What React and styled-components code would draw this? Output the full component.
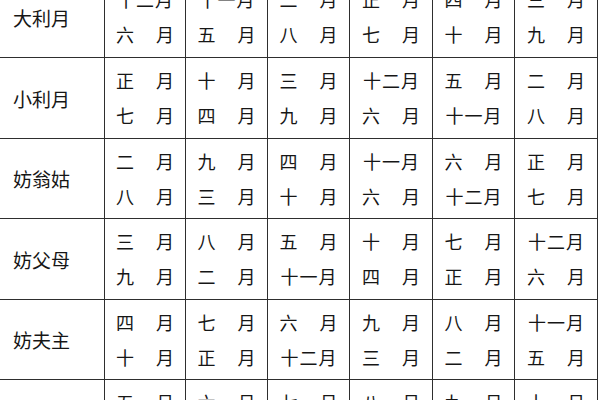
import styled, { createGlobalStyle } from 'styled-components';

const GlobalStyle = createGlobalStyle`
  html, body {
    margin: 0;
    padding: 0;
    background: #ffffff;
  }
  body {
    font-family: "Noto Sans CJK SC", "Noto Sans", sans-serif;
    color: #161616;
  }
`;

const Page = styled.div`
  width: 600px;
  height: 400px;
  overflow: hidden;
  background: #ffffff;
`;

const Grid = styled.div`
  display: grid;
  grid-template-columns: 104px 80px 81px 81px 82px 81px 82px;
  grid-template-rows: 80px 80px 79px 80px 79px 80px;
  gap: 1px;
  width: 597px;
  padding-right: 1px;
  margin-top: -23px;
  background: #2e2e2e;
`;

const Label = styled.div`
  display: flex;
  align-items: center;
  padding-left: 13px;
  background: #ffffff;
  font-size: 19px;
  color: #161616;
`;

const Cell = styled.div`
  display: flex;
  flex-direction: column;
  align-items: center;
  justify-content: center;
  background: #ffffff;
`;

const Line = styled.div`
  display: flex;
  justify-content: space-between;
  width: ${(p) => (p.$tight ? '56px' : '58px')};
  height: 35px;
  line-height: 35px;
  font-size: 18px;
  color: #161616;
`;

const rows = [
  ['大利月', [['十二月', '六月'], ['十一月', '五月'], ['二月', '八月'], ['正月', '七月'], ['四月', '十月'], ['三月', '九月']]],
  ['小利月', [['正月', '七月'], ['十月', '四月'], ['三月', '九月'], ['十二月', '六月'], ['五月', '十一月'], ['二月', '八月']]],
  ['妨翁姑', [['二月', '八月'], ['九月', '三月'], ['四月', '十月'], ['十一月', '六月'], ['六月', '十二月'], ['正月', '七月']]],
  ['妨父母', [['三月', '九月'], ['八月', '二月'], ['五月', '十一月'], ['十月', '四月'], ['七月', '正月'], ['十二月', '六月']]],
  ['妨夫主', [['四月', '十月'], ['七月', '正月'], ['六月', '十二月'], ['九月', '三月'], ['八月', '二月'], ['十一月', '五月']]],
  ['妨女身', [['五月', '十一月'], ['六月', '十二月'], ['七月', '正月'], ['八月', '二月'], ['九月', '三月'], ['十月', '四月']]],
];

function Month({ text }) {
  return (
    <Line $tight={text.length > 2}>
      {text.split('').map((ch, i) => (
        <span key={i}>{ch}</span>
      ))}
    </Line>
  );
}

export default function App() {
  return (
    <Page>
      <GlobalStyle />
      <Grid>
        {rows.map(([label, cells]) => [
          <Label key={label}>{label}</Label>,
          ...cells.map((pair, i) => (
            <Cell key={label + i}>
              <Month text={pair[0]} />
              <Month text={pair[1]} />
            </Cell>
          )),
        ])}
      </Grid>
    </Page>
  );
}
